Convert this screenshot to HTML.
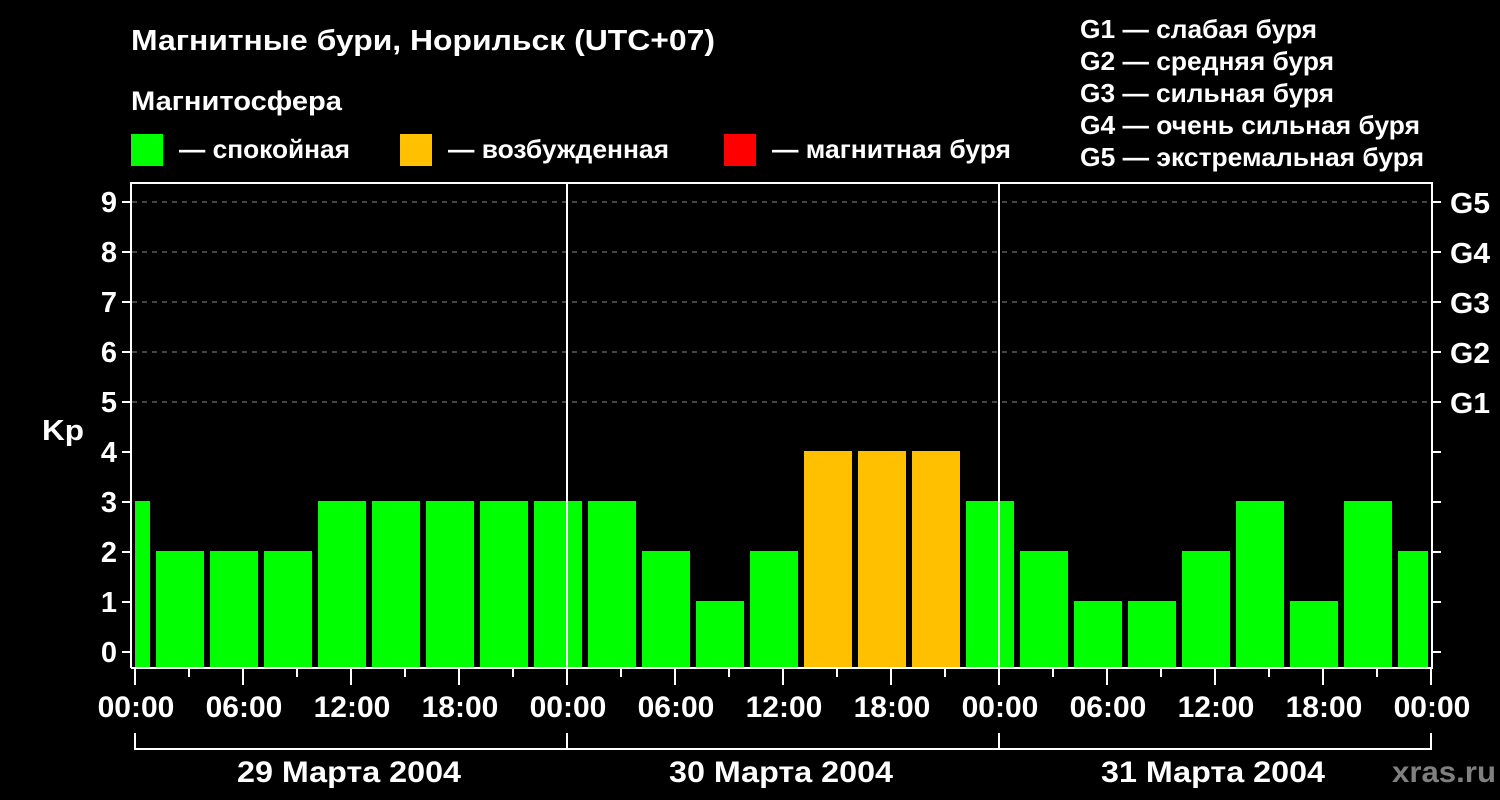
<!DOCTYPE html>
<html><head><meta charset="utf-8"><style>
html,body{margin:0;padding:0;background:#000;}
svg{display:block;font-family:"Liberation Sans",Arial,sans-serif;font-weight:bold;}
</style></head><body>
<svg width="1500" height="800" viewBox="0 0 1500 800" xmlns="http://www.w3.org/2000/svg">
<rect width="1500" height="800" fill="#000"/>
<g fill="#fff" lengthAdjust="spacingAndGlyphs">
<text x="131" y="50" font-size="29" textLength="584" lengthAdjust="spacingAndGlyphs">Магнитные бури, Норильск (UTC+07)</text>
<text x="131" y="110" font-size="27" textLength="211" lengthAdjust="spacingAndGlyphs">Магнитосфера</text>
<text x="179" y="158" font-size="26" textLength="171" lengthAdjust="spacingAndGlyphs">— спокойная</text>
<text x="448" y="158" font-size="26" textLength="221" lengthAdjust="spacingAndGlyphs">— возбужденная</text>
<text x="772" y="158" font-size="26" textLength="239" lengthAdjust="spacingAndGlyphs">— магнитная буря</text>
<text x="1080" y="38" font-size="26" textLength="237" lengthAdjust="spacingAndGlyphs">G1 — слабая буря</text>
<text x="1080" y="70" font-size="26" textLength="254" lengthAdjust="spacingAndGlyphs">G2 — средняя буря</text>
<text x="1080" y="102" font-size="26" textLength="254" lengthAdjust="spacingAndGlyphs">G3 — сильная буря</text>
<text x="1080" y="134" font-size="26" textLength="340" lengthAdjust="spacingAndGlyphs">G4 — очень сильная буря</text>
<text x="1080" y="166" font-size="26" textLength="344" lengthAdjust="spacingAndGlyphs">G5 — экстремальная буря</text>
</g>
<rect x="131" y="134" width="32" height="32" fill="#00ff00"/>
<rect x="400" y="134" width="32" height="32" fill="#ffc000"/>
<rect x="724" y="134" width="32" height="32" fill="#ff0000"/>
<g stroke="#888" stroke-width="1" stroke-dasharray="5,5">
<line x1="132" y1="202" x2="1432" y2="202"/>
<line x1="132" y1="252" x2="1432" y2="252"/>
<line x1="132" y1="302" x2="1432" y2="302"/>
<line x1="132" y1="352" x2="1432" y2="352"/>
<line x1="132" y1="402" x2="1432" y2="402"/>
</g>
<g>
<rect x="135" y="501" width="15" height="167" fill="#00ff00"/>
<rect x="156" y="551" width="48" height="117" fill="#00ff00"/>
<rect x="210" y="551" width="48" height="117" fill="#00ff00"/>
<rect x="264" y="551" width="48" height="117" fill="#00ff00"/>
<rect x="318" y="501" width="48" height="167" fill="#00ff00"/>
<rect x="372" y="501" width="48" height="167" fill="#00ff00"/>
<rect x="426" y="501" width="48" height="167" fill="#00ff00"/>
<rect x="480" y="501" width="48" height="167" fill="#00ff00"/>
<rect x="534" y="501" width="48" height="167" fill="#00ff00"/>
<rect x="588" y="501" width="48" height="167" fill="#00ff00"/>
<rect x="642" y="551" width="48" height="117" fill="#00ff00"/>
<rect x="696" y="601" width="48" height="67" fill="#00ff00"/>
<rect x="750" y="551" width="48" height="117" fill="#00ff00"/>
<rect x="804" y="451" width="48" height="217" fill="#ffc000"/>
<rect x="858" y="451" width="48" height="217" fill="#ffc000"/>
<rect x="912" y="451" width="48" height="217" fill="#ffc000"/>
<rect x="966" y="501" width="48" height="167" fill="#00ff00"/>
<rect x="1020" y="551" width="48" height="117" fill="#00ff00"/>
<rect x="1074" y="601" width="48" height="67" fill="#00ff00"/>
<rect x="1128" y="601" width="48" height="67" fill="#00ff00"/>
<rect x="1182" y="551" width="48" height="117" fill="#00ff00"/>
<rect x="1236" y="501" width="48" height="167" fill="#00ff00"/>
<rect x="1290" y="601" width="48" height="67" fill="#00ff00"/>
<rect x="1344" y="501" width="48" height="167" fill="#00ff00"/>
<rect x="1398" y="551" width="30" height="117" fill="#00ff00"/>
</g>
<g stroke="#fff" stroke-width="2" fill="none">
<polyline points="131,668 131,183 1432,183 1432,668 131,668"/>
<line x1="567" y1="183" x2="567" y2="668"/>
<line x1="999" y1="183" x2="999" y2="668"/>
<path d="M122 202H131M122 252H131M122 302H131M122 352H131M122 402H131M122 452H131M122 502H131M122 552H131M122 602H131M122 652H131"/>
<path d="M1432 202H1441M1432 252H1441M1432 302H1441M1432 352H1441M1432 402H1441M1432 452H1441M1432 502H1441M1432 552H1441M1432 602H1441M1432 652H1441"/>
<path d="M135 668V685M567 668V685M999 668V685M1431 668V685M243 668V685M351 668V685M459 668V685M675 668V685M783 668V685M891 668V685M1107 668V685M1215 668V685M1323 668V685"/>
<path d="M189 668V677M297 668V677M405 668V677M513 668V677M621 668V677M729 668V677M837 668V677M945 668V677M1053 668V677M1161 668V677M1269 668V677M1377 668V677"/>
<path d="M135 733V749H1431V733M567 733V749M999 733V749"/>
</g>
<g fill="#fff" font-size="29" text-anchor="end">
<text x="117" y="212">9</text><text x="117" y="262">8</text><text x="117" y="312">7</text>
<text x="117" y="362">6</text><text x="117" y="412">5</text><text x="117" y="462">4</text>
<text x="117" y="512">3</text><text x="117" y="562">2</text><text x="117" y="612">1</text>
<text x="117" y="662">0</text>
</g>
<g fill="#fff" font-size="29">
<text x="1450" y="213" textLength="40" lengthAdjust="spacingAndGlyphs">G5</text>
<text x="1450" y="263" textLength="40" lengthAdjust="spacingAndGlyphs">G4</text>
<text x="1450" y="313" textLength="40" lengthAdjust="spacingAndGlyphs">G3</text>
<text x="1450" y="363" textLength="40" lengthAdjust="spacingAndGlyphs">G2</text>
<text x="1450" y="413" textLength="40" lengthAdjust="spacingAndGlyphs">G1</text>
<text x="42" y="440" textLength="42" lengthAdjust="spacingAndGlyphs">Kp</text>
</g>
<g fill="#fff" font-size="30" text-anchor="middle">
<text x="136" y="717">00:00</text><text x="244" y="717">06:00</text><text x="352" y="717">12:00</text>
<text x="460" y="717">18:00</text><text x="568" y="717">00:00</text><text x="676" y="717">06:00</text>
<text x="784" y="717">12:00</text><text x="892" y="717">18:00</text><text x="1000" y="717">00:00</text>
<text x="1108" y="717">06:00</text><text x="1216" y="717">12:00</text><text x="1324" y="717">18:00</text>
<text x="1432" y="717">00:00</text>
</g>
<g fill="#fff" font-size="30">
<text x="237" y="782" textLength="224" lengthAdjust="spacingAndGlyphs">29 Марта 2004</text>
<text x="669" y="782" textLength="224" lengthAdjust="spacingAndGlyphs">30 Марта 2004</text>
<text x="1101" y="782" textLength="224" lengthAdjust="spacingAndGlyphs">31 Марта 2004</text>
</g>
<text x="1392" y="782" fill="#808080" font-size="30" textLength="104" lengthAdjust="spacingAndGlyphs">xras.ru</text>
</svg>
</body></html>
